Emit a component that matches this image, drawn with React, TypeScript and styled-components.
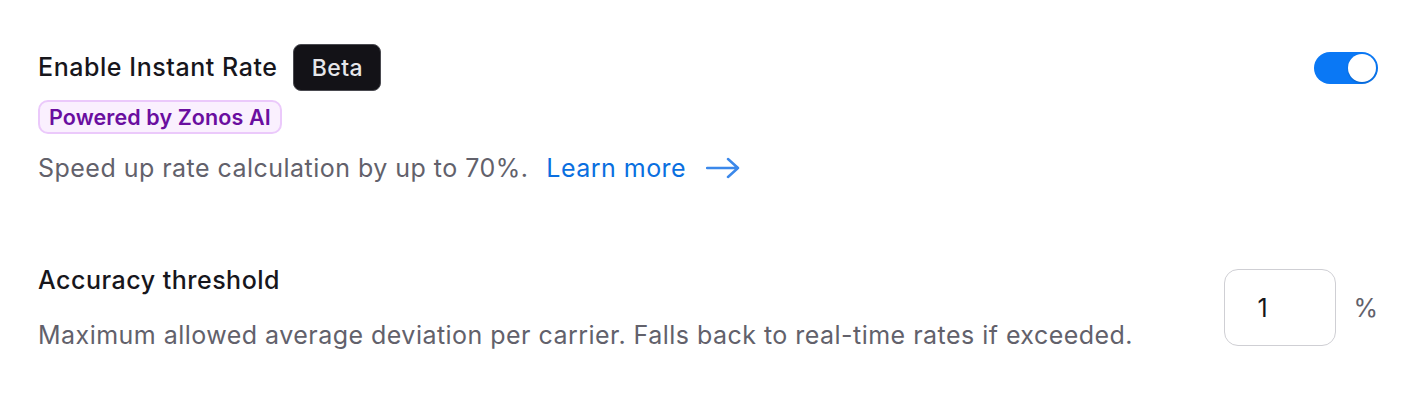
import React from "react";
import styled, { createGlobalStyle } from "styled-components";

const Global = createGlobalStyle`
  html, body { margin: 0; padding: 0; background: #ffffff; }
  body { font-family: Inter, "Noto Sans", sans-serif; -webkit-font-smoothing: antialiased; }
`;

const Page = styled.div`
  display: flex;
  flex-direction: column;
  padding: 44px 46px 0 38px;
  gap: 82px;
`;

const Row = styled.div<{ $align?: string }>`
  display: flex;
  justify-content: space-between;
  align-items: ${(p) => p.$align || "flex-start"};
`;

const Col = styled.div`
  display: flex;
  flex-direction: column;
`;

const TitleLine = styled.div`
  display: flex;
  align-items: center;
  gap: 16px;
`;

const Title = styled.div`
  font-size: 25px;
  font-weight: 450;
  color: #17161c;
  letter-spacing: 0.55px;
  line-height: 47px;
`;

const Beta = styled.span`
  display: inline-flex;
  align-items: center;
  justify-content: center;
  width: 88px;
  height: 47px;
  box-sizing: border-box;
  background: #131217;
  border: 1.5px solid #4a4a50;
  border-radius: 8px;
  color: #e6e6ea;
  font-size: 23px;
  font-weight: 500;
  letter-spacing: 0.4px;
`;

const Pill = styled.span`
  align-self: flex-start;
  display: inline-flex;
  align-items: center;
  height: 34px;
  box-sizing: border-box;
  margin-top: 9px;
  padding: 0 9px;
  background: #faf0fe;
  border: 2px solid #ebc9fb;
  border-radius: 10px;
  color: #6a0ea0;
  font-size: 21.5px;
  font-weight: 600;
  letter-spacing: 0.1px;
`;

const Desc = styled.div<{ $mt?: number }>`
  margin-top: ${(p) => p.$mt ?? 0}px;
  display: flex;
  align-items: center;
  font-size: 25px;
  letter-spacing: 0.47px;
  color: #62616b;
  line-height: 30px;
`;

const Link = styled.a`
  margin-left: 18px;
  display: inline-flex;
  align-items: center;
  gap: 20px;
  color: #0a6fe0;
  text-decoration: none;
`;

const Toggle = styled.div`
  margin-top: 8px;
  width: 64px;
  height: 32px;
  border-radius: 16px;
  background: #0a78f5;
  display: flex;
  align-items: center;
  justify-content: flex-end;
  padding: 0 2px;
  box-sizing: border-box;
`;

const Knob = styled.div`
  width: 28px;
  height: 28px;
  border-radius: 50%;
  background: #fff;
  box-shadow: 0 1px 2px rgba(0, 0, 0, 0.2);
`;

const Label = styled.div`
  font-size: 25px;
  font-weight: 450;
  letter-spacing: 0.5px;
  color: #17161c;
  line-height: 30px;
`;

const InputWrap = styled.div`
  display: flex;
  align-items: center;
  gap: 17px;
`;

const NumBox = styled.div`
  width: 112px;
  height: 77px;
  box-sizing: border-box;
  border: 1.5px solid #cfcfd4;
  border-radius: 14px;
  display: flex;
  align-items: center;
  padding-left: 32px;
  font-size: 25px;
  color: #17161c;
`;

const Unit = styled.span`
  font-size: 25px;
  color: #62616b;
`;

const Arrow = () => (
  <svg width="34" height="22" viewBox="0 0 34 22" fill="none">
    <path d="M1 11 H32 M22 2 L32 11 L22 20" stroke="#3b88ea" strokeWidth="2.5" strokeLinecap="round" strokeLinejoin="round" />
  </svg>
);

export default function App() {
  return (
    <>
      <Global />
      <Page>
        <Row>
          <Col>
            <TitleLine>
              <Title>Enable Instant Rate</Title>
              <Beta>Beta</Beta>
            </TitleLine>
            <Pill>Powered by Zonos AI</Pill>
            <Desc $mt={19}>
              Speed up rate calculation by up to 70%.
              <Link href="#">
                Learn more <Arrow />
              </Link>
            </Desc>
          </Col>
          <Toggle>
            <Knob />
          </Toggle>
        </Row>
        <Row $align="center">
          <Col>
            <Label>Accuracy threshold</Label>
            <Desc $mt={25}>Maximum allowed average deviation per carrier. Falls back to real-time rates if exceeded.</Desc>
          </Col>
          <InputWrap>
            <NumBox>1</NumBox>
            <Unit>%</Unit>
          </InputWrap>
        </Row>
      </Page>
    </>
  );
}
